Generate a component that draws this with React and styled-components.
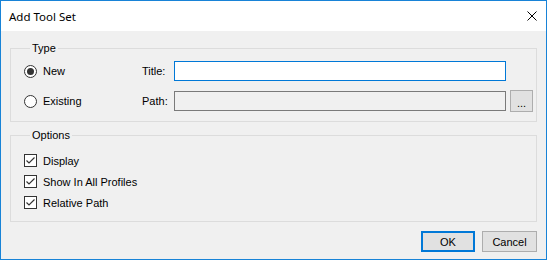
import React, { useState } from "react";
import styled, { createGlobalStyle } from "styled-components";

const GlobalStyle = createGlobalStyle`
  html, body {
    margin: 0;
    padding: 0;
    background: #ffffff;
  }
  * {
    box-sizing: border-box;
  }
`;

const App = () => {
  const [mode, setMode] = useState("new");
  const [opts, setOpts] = useState({ display: true, all: true, relative: true });

  const toggle = (key) => setOpts({ ...opts, [key]: !opts[key] });

  return (
    <>
      <GlobalStyle />
      <Window>
        <TitleBar>
          <Caption>Add Tool Set</Caption>
          <CloseButton aria-label="Close">
            <svg width="10" height="10" viewBox="0 0 10 10">
              <path d="M0.5 0.5 L9.5 9.5 M9.5 0.5 L0.5 9.5" stroke="#000" strokeWidth="1" fill="none" />
            </svg>
          </CloseButton>
        </TitleBar>
        <Body>
          <Group>
            <Legend>Type</Legend>
            <TypeGrid>
              <Radio checked={mode === "new"} onClick={() => setMode("new")}>
                <RadioDot checked={mode === "new"} />
                New
              </Radio>
              <FieldLabel>Title:</FieldLabel>
              <TextBox focused />
              <span />
              <Radio checked={mode === "existing"} onClick={() => setMode("existing")}>
                <RadioDot checked={mode === "existing"} />
                Existing
              </Radio>
              <FieldLabel>Path:</FieldLabel>
              <TextBox disabled />
              <BrowseButton>...</BrowseButton>
            </TypeGrid>
          </Group>
          <Group $options>
            <Legend>Options</Legend>
            <CheckList>
              <Check onClick={() => toggle("display")}>
                <CheckBox checked={opts.display} />
                Display
              </Check>
              <Check onClick={() => toggle("all")}>
                <CheckBox checked={opts.all} />
                Show In All Profiles
              </Check>
              <Check onClick={() => toggle("relative")}>
                <CheckBox checked={opts.relative} />
                Relative Path
              </Check>
            </CheckList>
          </Group>
          <Footer>
            <Button $default>OK</Button>
            <Button>Cancel</Button>
          </Footer>
        </Body>
      </Window>
    </>
  );
};

const CheckBox = ({ checked }) => (
  <Box>
    {checked ? (
      <svg width="11" height="11" viewBox="0 0 11 11">
        <path d="M1.5 5.5 L4 8 L9.5 2.5" stroke="#333" strokeWidth="1.2" fill="none" />
      </svg>
    ) : null}
  </Box>
);

export default App;

const Window = styled.div`
  width: 547px;
  height: 260px;
  border: 1px solid #1883d7;
  display: flex;
  flex-direction: column;
  background: #f0f0f0;
  font-family: "Liberation Sans", Arial, sans-serif;
  font-size: 11px;
  color: #000;
`;

const TitleBar = styled.div`
  height: 30px;
  background: #ffffff;
  display: flex;
  align-items: center;
  justify-content: space-between;
  padding: 0 9px 0 8px;
`;

const Caption = styled.div`
  font-family: "Noto Sans", "Open Sans", sans-serif;
  font-size: 11.5px;
  padding-top: 1px;
`;

const CloseButton = styled.div`
  width: 10px;
  height: 10px;
  display: flex;
  margin-top: -1px;
`;

const Body = styled.div`
  flex: 1;
  display: flex;
  flex-direction: column;
  padding: 11px 9px 7px 9px;
`;

const Group = styled.fieldset`
  margin: ${(p) => (p.$options ? "7px 0 0 0" : "0")};
  padding: ${(p) => (p.$options ? "6px 12px 12px 13px" : "6px 3px 10px 13px")};
  border: 1px solid #dcdcdc;
  min-width: 0;
`;

const Legend = styled.legend`
  margin-left: 6px;
  padding: 0 2px;
  line-height: 13px;
`;

const TypeGrid = styled.div`
  display: grid;
  grid-template-columns: 118px 32px 332px 27px;
  grid-auto-rows: 20px;
  row-gap: 10px;
  align-items: center;
`;

const Radio = styled.label`
  display: flex;
  align-items: center;
  gap: 6px;
  cursor: pointer;
`;

const RadioDot = styled.span`
  width: 13px;
  height: 13px;
  border-radius: 50%;
  border: 1px solid #333;
  background: #fff;
  display: flex;
  align-items: center;
  justify-content: center;
  &::after {
    content: "";
    width: 7px;
    height: 7px;
    border-radius: 50%;
    background: #333;
    display: ${(p) => (p.checked ? "block" : "none")};
  }
`;

const FieldLabel = styled.span``;

const TextBox = styled.input`
  width: 332px;
  height: 20px;
  border: 1px solid ${(p) => (p.focused ? "#0078d7" : "#7a7a7a")};
  background: ${(p) => (p.disabled ? "#f0f0f0" : "#fff")};
  outline: none;
  padding: 0 3px;
  font: inherit;
`;

const BrowseButton = styled.button`
  justify-self: end;
  width: 23px;
  height: 22px;
  border: 1px solid #adadad;
  background: #e1e1e1;
  font: inherit;
  padding: 4px 0 0 0;
  line-height: 11px;
`;

const CheckList = styled.div`
  display: flex;
  flex-direction: column;
  gap: 8px;
  padding-top: 6px;
`;

const Check = styled.label`
  display: flex;
  align-items: center;
  gap: 6px;
  height: 13px;
  cursor: pointer;
`;

const Box = styled.span`
  width: 13px;
  height: 13px;
  border: 1px solid #333;
  background: #fff;
  display: flex;
  align-items: center;
  justify-content: center;
`;

const Footer = styled.div`
  margin-top: auto;
  display: flex;
  justify-content: flex-end;
  gap: 7px;
`;

const Button = styled.button`
  width: ${(p) => (p.$default ? "54px" : "55px")};
  height: 21px;
  background: #e1e1e1;
  border: ${(p) => (p.$default ? "2px solid #0078d7" : "1px solid #adadad")};
  font: inherit;
  padding: 0;
  color: #000;
`;
